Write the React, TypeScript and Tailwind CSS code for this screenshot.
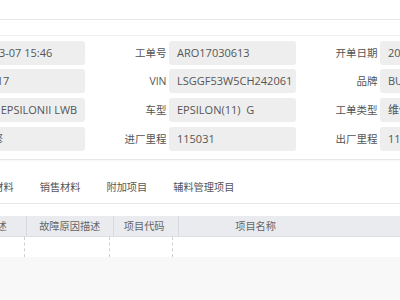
type Field = { label: string; value: string; pad?: string };

const rows: Field[][] = [
  [
    { label: "开单日期", value: "2017-03-07 15:46", pad: "pl-[6px]" },
    { label: "工单号", value: "ARO17030613" },
    { label: "开单日期", value: "2017-03-07" },
  ],
  [
    { label: "车牌号", value: "沪A90217", pad: "pl-[2px]" },
    { label: "VIN", value: "LSGGF53W5CH242061" },
    { label: "品牌", value: "BUICK" },
  ],
  [
    { label: "车系", value: "BUICK EPSILONII LWB" },
    { label: "车型", value: "EPSILON(11)  G" },
    { label: "工单类型", value: "维修" },
  ],
  [
    { label: "维修类型", value: "一般维修", pad: "pl-[1px]" },
    { label: "进厂里程", value: "115031" },
    { label: "出厂里程", value: "115031" },
  ],
];

const tabs = ["维修材料", "销售材料", "附加项目", "辅料管理项目"];

const App = () => {
  return (
    <div className="w-[400px] h-[300px] overflow-hidden bg-[#f8f8f8] text-[10px] text-[#555] font-['Open_Sans','Noto_Sans_CJK_SC',sans-serif]">
      <div className="h-[20px] bg-white border-b border-[#e6e6e6]" />
      <div className="bg-white">
        <div className="h-[16px] border-b border-[#f1f1f1]" />
        <div className="pt-[4.7px] pb-[8px] flex flex-col gap-y-[4.7px] border-b border-[#e8e8e8] shadow-[0_1px_2px_rgba(0,0,0,0.04)]">
          {rows.map((row, i) => (
            <div key={i} className="flex -ml-[126px] whitespace-pre">
              {row.map((f, j) => (
                <div key={j} className="flex shrink-0">
                  <div className="w-[84px] pr-[2.5px] text-right text-[10.5px] leading-[24px]">{f.label}</div>
                  <div
                    className={`w-[127px] h-[24px] leading-[24px] text-[11px] bg-[#eeeeee] rounded-[3px] pr-[8px] overflow-hidden ${f.pad ?? "pl-[8px]"}`}
                  >
                    {f.value}
                  </div>
                </div>
              ))}
            </div>
          ))}
        </div>
        <div className="pt-[11px] border-b border-[#e6e6e6]">
          <div className="flex -ml-[40px] whitespace-nowrap">
            {tabs.map((t) => (
              <div key={t} className="px-[13px] h-[32px] leading-[32px] text-[10.2px] shrink-0">
                {t}
              </div>
            ))}
          </div>
        </div>
        <div className="h-[12px]" />
      </div>
      <div className="-ml-[46px] whitespace-nowrap text-[#666] text-[10.2px]">
        <div className="flex h-[21px] leading-[21px] bg-[#e9ebef] border-b border-[#dcdfe5]">
          <div className="w-[82px] px-[12px] border-r border-[#d6d9df]">故障描述</div>
          <div className="w-[98px] px-[12px] border-r border-[#d6d9df]">故障原因描述</div>
          <div className="w-[73px] px-[10px] border-r border-[#d6d9df]">项目代码</div>
          <div className="w-[182px] text-center">项目名称</div>
          <div className="w-[80px]" />
        </div>
        <div className="flex h-[20px] bg-white">
          <div className="w-[82px] border-r border-dashed border-[#cfcfcf]" />
          <div className="w-[98px] border-r border-dashed border-[#cfcfcf]" />
          <div className="w-[73px] border-r border-dashed border-[#cfcfcf]" />
          <div className="w-[182px]" />
          <div className="w-[80px]" />
        </div>
      </div>
    </div>
  );
};

export default App;
